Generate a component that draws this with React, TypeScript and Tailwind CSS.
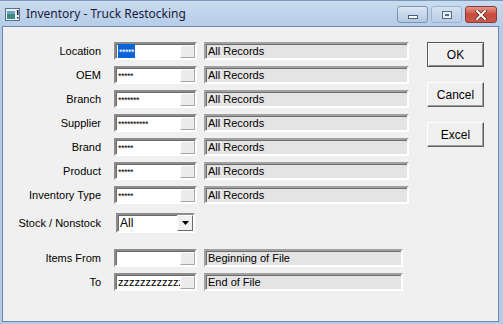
import React from 'react';

const FONT = { fontFamily: '"Liberation Sans", Arial, sans-serif' };

const rows = [
  { label: 'Location', value: '*****', selected: true },
  { label: 'OEM', value: '*****' },
  { label: 'Branch', value: '*******' },
  { label: 'Supplier', value: '**********' },
  { label: 'Brand', value: '*****' },
  { label: 'Product', value: '*****' },
  { label: 'Inventory Type', value: '*****' },
];

const LookupBox: React.FC<{ value: string; selected?: boolean; stars?: boolean }> = ({ value, selected, stars }) => (
  <div className="w-[83px] h-[18px] flex items-stretch bg-white border-2 border-t-[#8c8c8c] border-l-[#8c8c8c] border-r-white border-b-white shadow-[inset_1px_1px_#6b6b6b] overflow-hidden">
    <div className="flex-1 flex items-center pl-[2px] overflow-hidden whitespace-nowrap">
      {value && (
        <span
          className={
            (selected ? 'bg-[#0a64d8] text-white px-[1px] ' : 'text-black ') +
            (stars ? 'text-[9px] leading-[13px] tracking-[-0.5px] pt-[2px]' : 'text-[11px] leading-[13px]')
          }
        >
          {value}
        </span>
      )}
    </div>
    <div className="w-[15px] bg-[#ececec] border border-t-white border-l-white border-r-[#a8a8a8] border-b-[#a8a8a8] mt-[1px] mb-[0px]" />
  </div>
);

const Field: React.FC<{ text: string; width: string }> = ({ text, width }) => (
  <div className={`${width} h-[18px] flex items-center bg-[#e4e4e4] border-2 border-t-[#a0a0a0] border-l-[#a0a0a0] border-r-white border-b-white shadow-[inset_1px_1px_#6e6e6e] pl-[2px] text-[11px] text-black whitespace-nowrap overflow-hidden`}>
    {text}
  </div>
);

const Btn: React.FC<{ label: string; def?: boolean }> = ({ label, def }) => (
  <div
    className={
      'w-[57px] h-[25px] flex items-center justify-center text-[12px] text-black bg-[#f0f0f0] ' +
      (def
        ? 'border border-[#555] shadow-[inset_1px_1px_#fff,inset_-1px_-1px_#8a8a8a,inset_2px_2px_#e8e8e8]'
        : 'border border-t-white border-l-white border-r-[#5f5f5f] border-b-[#5f5f5f] shadow-[inset_-1px_-1px_#a0a0a0]')
    }
  >
    {label}
  </div>
);

export default function App() {
  return (
    <div className="w-[503px] h-[324px] bg-[#b4cbe6] flex flex-col pl-[2px] pr-[4px] pb-[2px]" style={FONT}>
      {/* Title bar */}
      <div className="h-[26px] flex items-center bg-gradient-to-b from-[#c9dbef] to-[#b6cde8] -ml-[2px] -mr-[4px] pl-[5px] pr-[6px] border-t border-[#7d97b8]">
        <svg width="15" height="13" viewBox="0 0 15 13" className="mt-[2px]">
          <rect x="0.5" y="0.5" width="14" height="12" fill="#e8eef6" stroke="#5a6f8c" />
          <rect x="2" y="3" width="8" height="8" fill="#3f8a7e" />
          <rect x="2" y="3" width="8" height="3" fill="#6fa3c9" />
          <rect x="12" y="2" width="1.5" height="5" fill="#223" />
          <rect x="12" y="9" width="1.5" height="1.5" fill="#223" />
        </svg>
        <span className="ml-[6px] text-[12px] text-[#1a1a3a] mt-[1px]" style={{ fontFamily: '"Noto Sans", "Open Sans", sans-serif' }}>
          Inventory - Truck Restocking
        </span>
        <div className="ml-auto flex items-start self-start mt-[5px] gap-[3px]">
          <div className="w-[31px] h-[17px] rounded-[3px] border border-[#7c93b3] bg-gradient-to-b from-[#dbe7f4] to-[#b2c8e2] flex items-center justify-center">
            <div className="w-[10px] h-[4px] bg-white border border-[#4d5f78] mt-[4px]" />
          </div>
          <div className="w-[31px] h-[17px] rounded-[3px] border border-[#9fb3cc] bg-gradient-to-b from-[#d4e2f1] to-[#b9cde5] flex items-center justify-center">
            <div className="w-[10px] h-[8px] border border-[#5a6d86] bg-[#e8eef5] flex items-center justify-center">
              <div className="w-[4px] h-[2px] border border-[#5a6d86]" />
            </div>
          </div>
          <div className="w-[32px] h-[17px] rounded-[3px] border border-[#8a3a34] bg-gradient-to-b from-[#e4998b] via-[#c8493a] to-[#c75b4b] flex items-center justify-center">
            <svg width="12" height="10" viewBox="0 0 12 10">
              <path d="M2 1 L10 9 M10 1 L2 9" stroke="#4a1c18" strokeWidth="3.2" strokeLinecap="square" />
              <path d="M2 1 L10 9 M10 1 L2 9" stroke="#ffffff" strokeWidth="2" strokeLinecap="square" />
            </svg>
          </div>
        </div>
      </div>

      {/* Client area */}
      <div className="flex-1 bg-[#f0f0f0] border border-[#6a87ad] flex text-[11px] text-black">
        <div className="flex flex-col pt-[15px]">
          {rows.map((r) => (
            <div key={r.label} className="flex items-center h-[18px] mb-[6px]">
              <div className="w-[98px] text-right text-[11px] leading-none">{r.label}</div>
              <div className="ml-[13px]">
                <LookupBox value={r.value} selected={r.selected} stars />
              </div>
              <div className="ml-[7px]">
                <Field text="All Records" width="w-[205px]" />
              </div>
            </div>
          ))}

          <div className="flex items-center h-[20px] mt-[3px]">
            <div className="w-[98px] text-right leading-none">Stock / Nonstock</div>
            <div className="ml-[15px] w-[79px] h-[20px] flex items-stretch bg-white border-2 border-t-[#8c8c8c] border-l-[#8c8c8c] border-r-white border-b-white shadow-[inset_1px_1px_#6b6b6b]">
              <div className="flex-1 flex items-center pl-[2px] text-[12px]">All</div>
              <div className="w-[16px] bg-[#f0f0f0] border border-t-white border-l-white border-r-[#6b6b6b] border-b-[#6b6b6b] flex items-center justify-center">
                <svg width="7" height="4" viewBox="0 0 7 4">
                  <path d="M0 0 H7 L3.5 4 Z" fill="#000" />
                </svg>
              </div>
            </div>
          </div>

          <div className="flex items-center h-[18px] mt-[16px]">
            <div className="w-[98px] text-right leading-none">Items From</div>
            <div className="ml-[13px]">
              <LookupBox value="" />
            </div>
            <div className="ml-[7px]">
              <Field text="Beginning of File" width="w-[199px]" />
            </div>
          </div>

          <div className="flex items-center h-[18px] mt-[6px]">
            <div className="w-[98px] text-right leading-none">To</div>
            <div className="ml-[13px]">
              <LookupBox value="zzzzzzzzzzzzzzz" />
            </div>
            <div className="ml-[7px]">
              <Field text="End of File" width="w-[199px]" />
            </div>
          </div>
        </div>

        <div className="flex flex-col gap-[15px] pt-[15px] ml-[18px]">
          <Btn label="OK" def />
          <Btn label="Cancel" />
          <Btn label="Excel" />
        </div>
      </div>
    </div>
  );
}
